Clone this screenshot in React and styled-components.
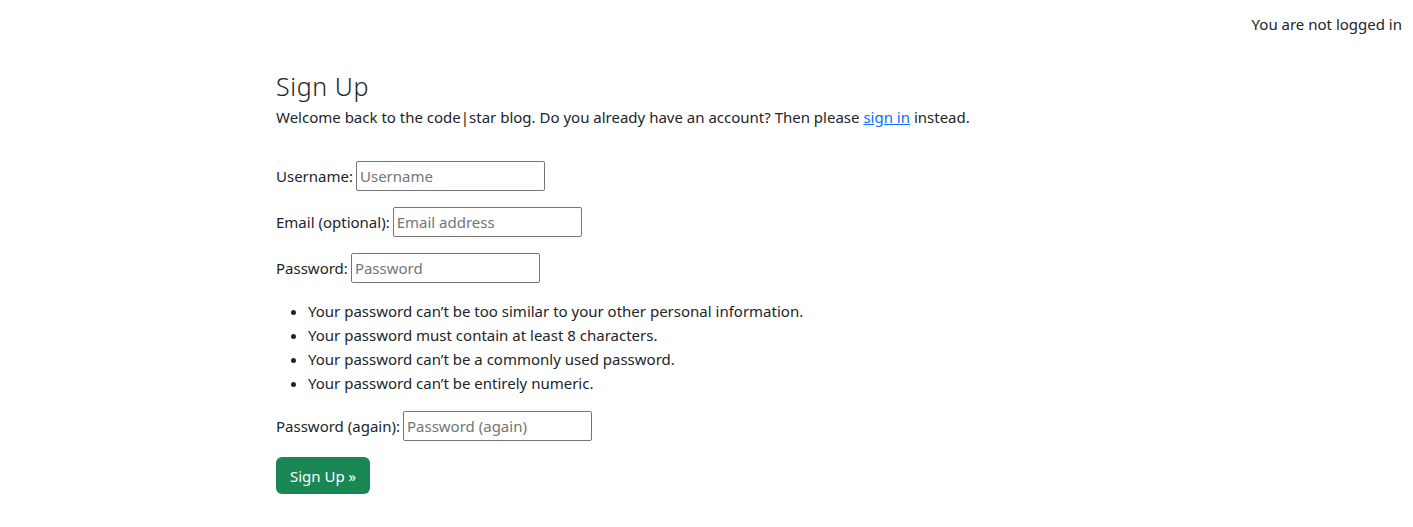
import styled, { createGlobalStyle } from "styled-components";

const GlobalStyle = createGlobalStyle`
  body {
    margin: 0;
    background: #fff;
    color: #212529;
    font-family: "Noto Sans", "Open Sans", sans-serif;
    font-size: 15px;
    line-height: 24px;
  }
`;

const TopBar = styled.header`
  display: flex;
  justify-content: flex-end;
  padding: 12px 11px 0 0;
  height: 36px;
`;

const Main = styled.main`
  padding: 23px 0 0 276px;
`;

const Title = styled.h2`
  margin: 0 0 4px;
  font-size: 25px;
  font-weight: 300;
  letter-spacing: 0.6px;
  line-height: 30px;
`;

const Lead = styled.p`
  margin: 0 0 32px;
`;

const Link = styled.a`
  color: #0d6efd;
  text-decoration: underline;
`;

const Row = styled.p`
  display: flex;
  align-items: center;
  gap: 3px;
  margin: 0 0 16px;
  height: 30px;
`;

const Input = styled.input`
  box-sizing: border-box;
  width: 189px;
  height: 30px;
  border: 1px solid #767676;
  border-radius: 2px;
  padding: 0 3px;
  font-family: inherit;
  font-size: 15px;
  color: #212529;
  &::placeholder {
    color: #757575;
  }
`;

const Rules = styled.ul`
  margin: 0 0 16px;
  padding-left: 32px;
`;

const Button = styled.button`
  background: #198754;
  color: #fff;
  border: none;
  border-radius: 6px;
  height: 37px;
  padding: 0 14px;
  font-family: inherit;
  font-size: 15px;
  cursor: pointer;
`;

export default function App() {
  return (
    <>
      <GlobalStyle />
      <TopBar>You are not logged in</TopBar>
      <Main>
        <Title>Sign Up</Title>
        <Lead>
          Welcome back to the code|star blog. Do you already have an account? Then please{" "}
          <Link href="#">sign in</Link> instead.
        </Lead>
        <form>
          <Row>
            <label>Username:</label>
            <Input placeholder="Username" />
          </Row>
          <Row>
            <label>Email (optional):</label>
            <Input placeholder="Email address" />
          </Row>
          <Row>
            <label>Password:</label>
            <Input type="password" placeholder="Password" />
          </Row>
          <Rules>
            <li>Your password can’t be too similar to your other personal information.</li>
            <li>Your password must contain at least 8 characters.</li>
            <li>Your password can’t be a commonly used password.</li>
            <li>Your password can’t be entirely numeric.</li>
          </Rules>
          <Row>
            <label>Password (again):</label>
            <Input type="password" placeholder="Password (again)" />
          </Row>
          <Button type="button">Sign Up »</Button>
        </form>
      </Main>
    </>
  );
}
